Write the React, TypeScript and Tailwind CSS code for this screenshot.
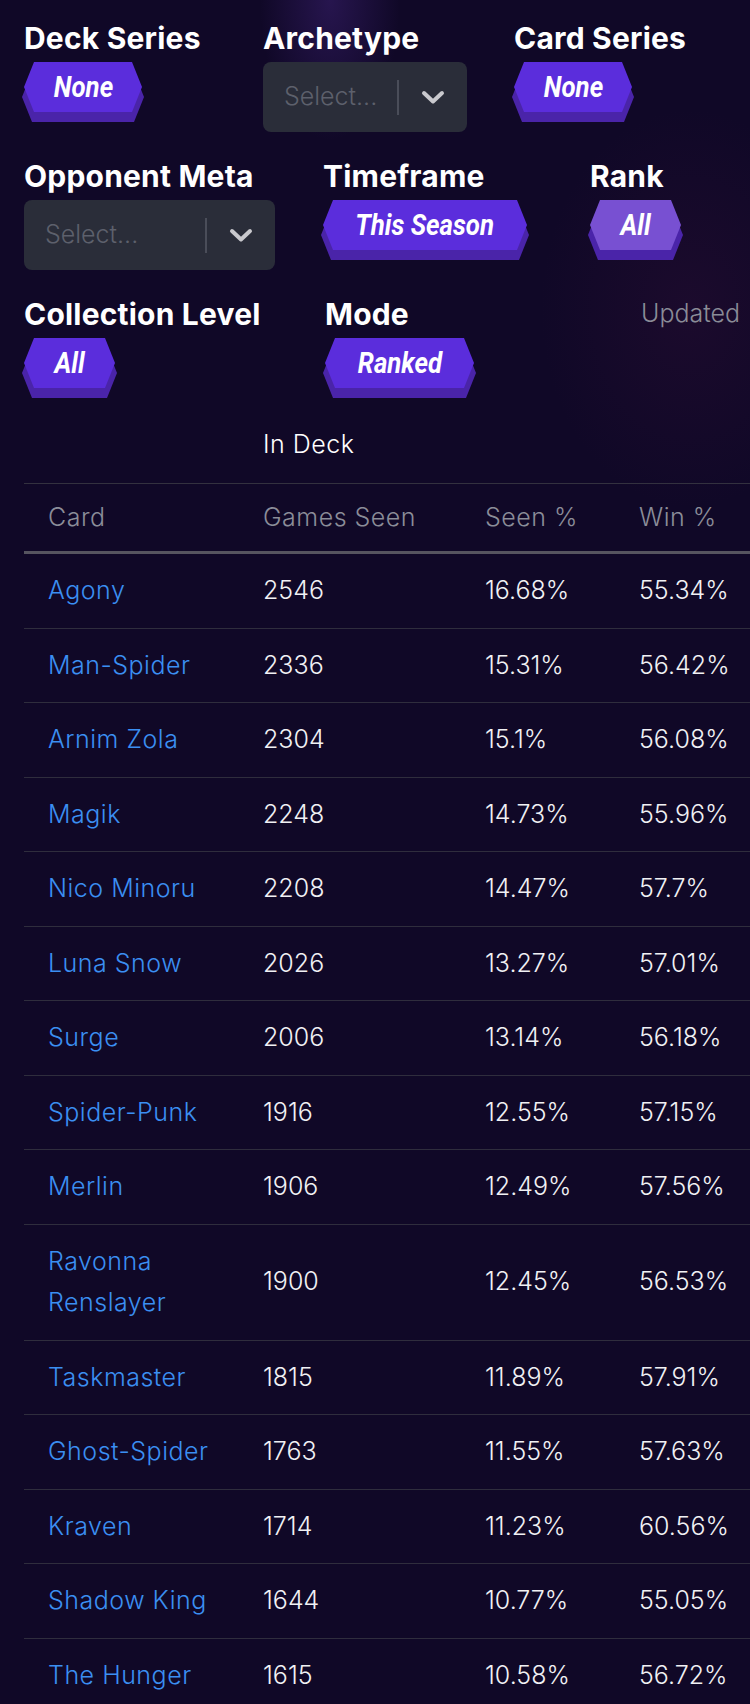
import React from "react";

const HEX =
  "[clip-path:polygon(10px_0,calc(100%_-_10px)_0,100%_50%,calc(100%_-_10px)_100%,10px_100%,0_50%)]";

interface HexButtonProps {
  text: string;
  width: string;
  soft?: boolean;
}

const HexButton: React.FC<HexButtonProps> = ({ text, width, soft }) => (
  <div className={`relative h-[60px] ${width}`}>
    <div className={`absolute -left-[2px] -right-[2px] top-[10px] bottom-0 bg-[#4a24a9] ${HEX}`} />
    <div
      className={`relative flex h-[50px] items-center justify-center ${HEX} ${
        soft ? "bg-[#7850d2]" : "bg-[#5b2ddc]"
      }`}
    >
      <span className="inline-block scale-x-[0.86] font-['Roboto',sans-serif] text-[30px] font-bold italic leading-none text-white">
        {text}
      </span>
    </div>
  </div>
);

const SelectBox: React.FC<{ width: string }> = ({ width }) => (
  <div className={`flex h-[70px] items-center rounded-lg bg-[#2a2d39] ${width}`}>
    <span className="flex-1 truncate pl-[21px] text-[25px] font-[350] text-[#5d606c]">Select...</span>
    <span className="h-[35px] w-[2px] bg-[#4a4d59]" />
    <span className="flex w-[68px] items-center justify-center">
      <svg width="24" height="15" viewBox="0 0 24 15" fill="none">
        <polyline
          points="3,3 12,11.5 21,3"
          stroke="#c9c9ce"
          strokeWidth="4"
          strokeLinecap="round"
          strokeLinejoin="round"
        />
      </svg>
    </span>
  </div>
);

const FilterGroup: React.FC<{ label: string; className: string; children?: React.ReactNode }> = ({
  label,
  className,
  children,
}) => (
  <div className={`shrink-0 ${className}`}>
    <div className="whitespace-nowrap text-[30px] font-bold leading-[35px] tracking-[0.2px] text-white">
      {label}
    </div>
    <div className="mt-[6px]">{children}</div>
  </div>
);

const cards: [string, number, string, string][] = [
  ["Agony", 2546, "16.68%", "55.34%"],
  ["Man-Spider", 2336, "15.31%", "56.42%"],
  ["Arnim Zola", 2304, "15.1%", "56.08%"],
  ["Magik", 2248, "14.73%", "55.96%"],
  ["Nico Minoru", 2208, "14.47%", "57.7%"],
  ["Luna Snow", 2026, "13.27%", "57.01%"],
  ["Surge", 2006, "13.14%", "56.18%"],
  ["Spider-Punk", 1916, "12.55%", "57.15%"],
  ["Merlin", 1906, "12.49%", "57.56%"],
  ["Ravonna Renslayer", 1900, "12.45%", "56.53%"],
  ["Taskmaster", 1815, "11.89%", "57.91%"],
  ["Ghost-Spider", 1763, "11.55%", "57.63%"],
  ["Kraven", 1714, "11.23%", "60.56%"],
  ["Shadow King", 1644, "10.77%", "55.05%"],
  ["The Hunger", 1615, "10.58%", "56.72%"],
];

const headCell =
  "border-t border-b-[3px] border-t-[#33313f] border-b-[#56545f] py-[13px] font-[350] tracking-[0.5px]";

export default function App() {
  return (
    <div className="min-h-screen w-[750px] overflow-hidden bg-[#100827] bg-[image:radial-gradient(ellipse_70px_140px_at_44%_0%,rgba(92,52,170,0.3),transparent),radial-gradient(ellipse_150px_200px_at_92%_18%,rgba(80,22,70,0.18),transparent)] font-['Inter',sans-serif]">
      <div className="px-6 pt-[21px]">
        <div className="flex">
          <FilterGroup label="Deck Series" className="w-[239px]">
            <HexButton text="None" width="w-[118px]" />
          </FilterGroup>
          <FilterGroup label="Archetype" className="w-[251px]">
            <SelectBox width="w-[204px]" />
          </FilterGroup>
          <FilterGroup label="Card Series" className="w-[200px]">
            <HexButton text="None" width="w-[118px]" />
          </FilterGroup>
        </div>

        <div className="mt-[27px] flex">
          <FilterGroup label="Opponent Meta" className="w-[299px]">
            <SelectBox width="w-[251px]" />
          </FilterGroup>
          <FilterGroup label="Timeframe" className="w-[267px]">
            <HexButton text="This Season" width="w-[204px]" />
          </FilterGroup>
          <FilterGroup label="Rank" className="w-[120px]">
            <HexButton text="All" width="w-[91px]" soft />
          </FilterGroup>
        </div>

        <div className="mt-[27px] flex">
          <FilterGroup label="Collection Level" className="w-[301px]">
            <HexButton text="All" width="w-[91px]" />
          </FilterGroup>
          <FilterGroup label="Mode" className="w-[316px]">
            <HexButton text="Ranked" width="w-[149px]" />
          </FilterGroup>
          <div className="shrink-0 whitespace-nowrap text-[25px] font-light leading-[33px] text-[#8a8c97]">
            Updated
          </div>
        </div>
      </div>

      <div className="mt-3 pl-6">
        <table className="w-[800px] table-fixed border-collapse text-left text-[25px] font-[350] leading-[41.5px]">
          <colgroup>
            <col className="w-[239px]" />
            <col className="w-[222px]" />
            <col className="w-[154px]" />
            <col />
          </colgroup>
          <thead>
            <tr>
              <th className="pt-[14px] pb-[17px]" />
              <th colSpan={3} className="pt-[14px] pb-[17px] font-[350] tracking-[0.5px] text-white">
                In Deck
              </th>
            </tr>
            <tr className="text-[#8b8d99]">
              <th className={`${headCell} pl-6`}>Card</th>
              <th className={headCell}>Games Seen</th>
              <th className={headCell}>Seen %</th>
              <th className={headCell}>Win %</th>
            </tr>
          </thead>
          <tbody className="text-[#f1f1f4]">
            {cards.map(([name, games, seen, win]) => (
              <tr key={name} className="border-b border-[#2f2d3d]">
                <td className="py-4 pl-6 pr-6 tracking-[0.5px] text-[#3b8ff2]">{name}</td>
                <td className="py-4">{games}</td>
                <td className="py-4">{seen}</td>
                <td className="py-4">{win}</td>
              </tr>
            ))}
          </tbody>
        </table>
      </div>
    </div>
  );
}
